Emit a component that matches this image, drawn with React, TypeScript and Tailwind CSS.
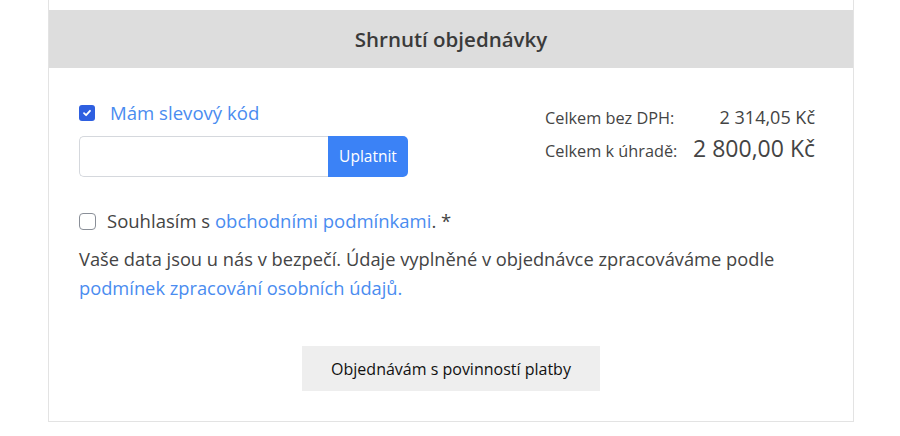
import React from "react";

export default function App() {
  return (
    <div className="w-[900px] h-[436px] bg-white overflow-hidden" style={{ fontFamily: '"Open Sans", "Noto Sans", sans-serif' }}>
      <div className="ml-[48px] w-[806px] h-[422px] border-x border-b border-[#e3e3e3] flex flex-col">
        <div className="h-[10px]" />
        <div className="h-[58px] bg-[#dddddd] flex items-center justify-center text-[20.5px] font-semibold text-[#3a3a3a]">
          Shrnutí objednávky
        </div>
        <div className="px-[30px] pt-[34px] flex flex-col">
          <div className="flex justify-between">
            <div className="flex flex-col">
              <label className="flex items-center gap-[15px] h-[22px]">
                <span className="w-[16px] h-[16px] rounded-[3px] bg-[#2e5fe0] flex items-center justify-center">
                  <svg width="10" height="10" viewBox="0 0 10 10"><path d="M2 5.2 L4.1 7.2 L8 2.8" stroke="white" strokeWidth="1.8" fill="none" strokeLinecap="round" strokeLinejoin="round" /></svg>
                </span>
                <span className="text-[18.6px] text-[#4a8cf0]">Mám slevový kód</span>
              </label>
              <div className="flex mt-[12px] h-[41px]">
                <input className="w-[249px] border border-[#d5d8dd] rounded-l-[5px] border-r-0 outline-none" />
                <button className="w-[80px] bg-[#3b82f6] text-white text-[15.5px] font-medium rounded-r-[5px]">Uplatnit</button>
              </div>
            </div>
            <div className="pr-[8px] pt-[2px] text-[#444]">
              <div className="flex items-baseline justify-between w-[270px] h-[30px]">
                <span className="text-[16.3px]">Celkem bez DPH:</span>
                <span className="text-[18px]">2 314,05 Kč</span>
              </div>
              <div className="flex items-baseline justify-between w-[270px]">
                <span className="text-[16.3px]">Celkem k úhradě:</span>
                <span className="text-[23px] leading-[28px]">2 800,00 Kč</span>
              </div>
            </div>
          </div>
          <label className="flex items-center gap-[11px] mt-[31px] text-[18.5px] leading-[26px] text-[#444]">
            <span className="w-[17px] h-[17px] rounded-[4px] border border-[#8a8f98] bg-white" />
            <span>Souhlasím s <span className="text-[#4a8cf0]">obchodními podmínkami</span>. *</span>
          </label>
          <p className="mt-[10px] text-[18.3px] leading-[29px] text-[#444]">
            Vaše data jsou u nás v bezpečí. Údaje vyplněné v objednávce zpracováváme podle
            <br />
            <span className="text-[#4a8cf0]">podmínek zpracování osobních údajů.</span>
          </p>
          <div className="flex justify-center mt-[44px]">
            <button className="w-[298px] h-[45px] bg-[#eeeeee] text-[16px] text-[#111]">Objednávám s povinností platby</button>
          </div>
        </div>
      </div>
    </div>
  );
}
